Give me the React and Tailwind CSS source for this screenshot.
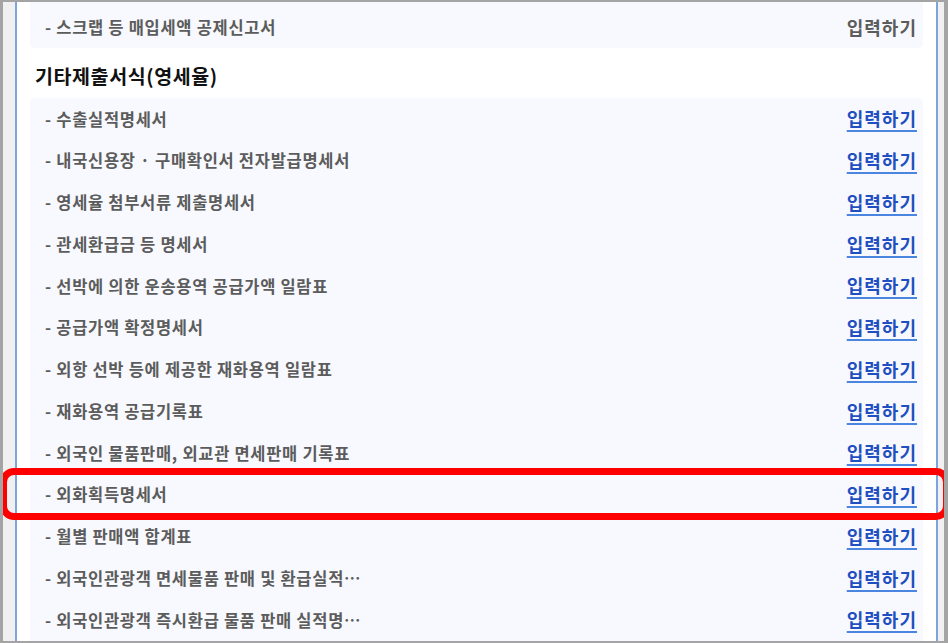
const rows = [
	"수출실적명세서",
	"내국신용장 · 구매확인서 전자발급명세서",
	"영세율 첨부서류 제출명세서",
	"관세환급금 등 명세서",
	"선박에 의한 운송용역 공급가액 일람표",
	"공급가액 확정명세서",
	"외항 선박 등에 제공한 재화용역 일람표",
	"재화용역 공급기록표",
	"외국인 물품판매, 외교관 면세판매 기록표",
	"외화획득명세서",
	"월별 판매액 합계표",
	"외국인관광객 면세물품 판매 및 환급실적…",
	"외국인관광객 즉시환급 물품 판매 실적명…",
];

const font = { fontFamily: '"Noto Sans CJK KR", "Noto Sans", sans-serif' };

const Row = ({ label, link = true }) => (
	<div className="h-[41.75px] flex items-center justify-between pl-[15px] pr-[6px]">
		<span className="text-[16.5px] tracking-[0.7px] font-semibold text-[#5c5c5c]">- {label}</span>
		{link ? (
			<a
				href="#"
				className="text-[18px] tracking-[1px] font-semibold text-[#1f4fc0] underline decoration-[#4a86e0] decoration-2 underline-offset-[4px]"
			>
				입력하기
			</a>
		) : (
			<span className="text-[18px] tracking-[1px] font-semibold text-[#5c5c5c]">입력하기</span>
		)}
	</div>
);

const App = () => {
	return (
		<div
			className="relative w-[948px] h-[643px] overflow-hidden bg-[#f0f0f0] border-l-[3px] border-t-2 border-r-[4px] border-b-2 border-[#a4a4a4]"
			style={font}
		>
			<div className="ml-[12px] mr-[6px] h-full bg-white border-x-2 border-[#7fa3de] pl-[13px] pr-[13px] overflow-hidden">
				<div className="h-[46px] pt-[4px] flex flex-col justify-center bg-[#f7f9fe] rounded-b-[5px]">
					<Row label="스크랩 등 매입세액 공제신고서" link={false} />
				</div>
				<div className="h-[50px] pt-[5px] pl-[5px] flex items-center">
					<h2 className="text-[19.5px] tracking-[0.6px] font-bold text-[#111]">기타제출서식(영세율)</h2>
				</div>
				<div className="bg-[#f7f9fe] rounded-t-[5px]">
					{rows.map((r) => (
						<Row key={r} label={r} />
					))}
				</div>
			</div>
			<div className="absolute left-[-3px] top-[466px] w-[950px] h-[52px] border-[7px] border-[#ff0000] rounded-[14px]" />
		</div>
	);
};

export default App;
